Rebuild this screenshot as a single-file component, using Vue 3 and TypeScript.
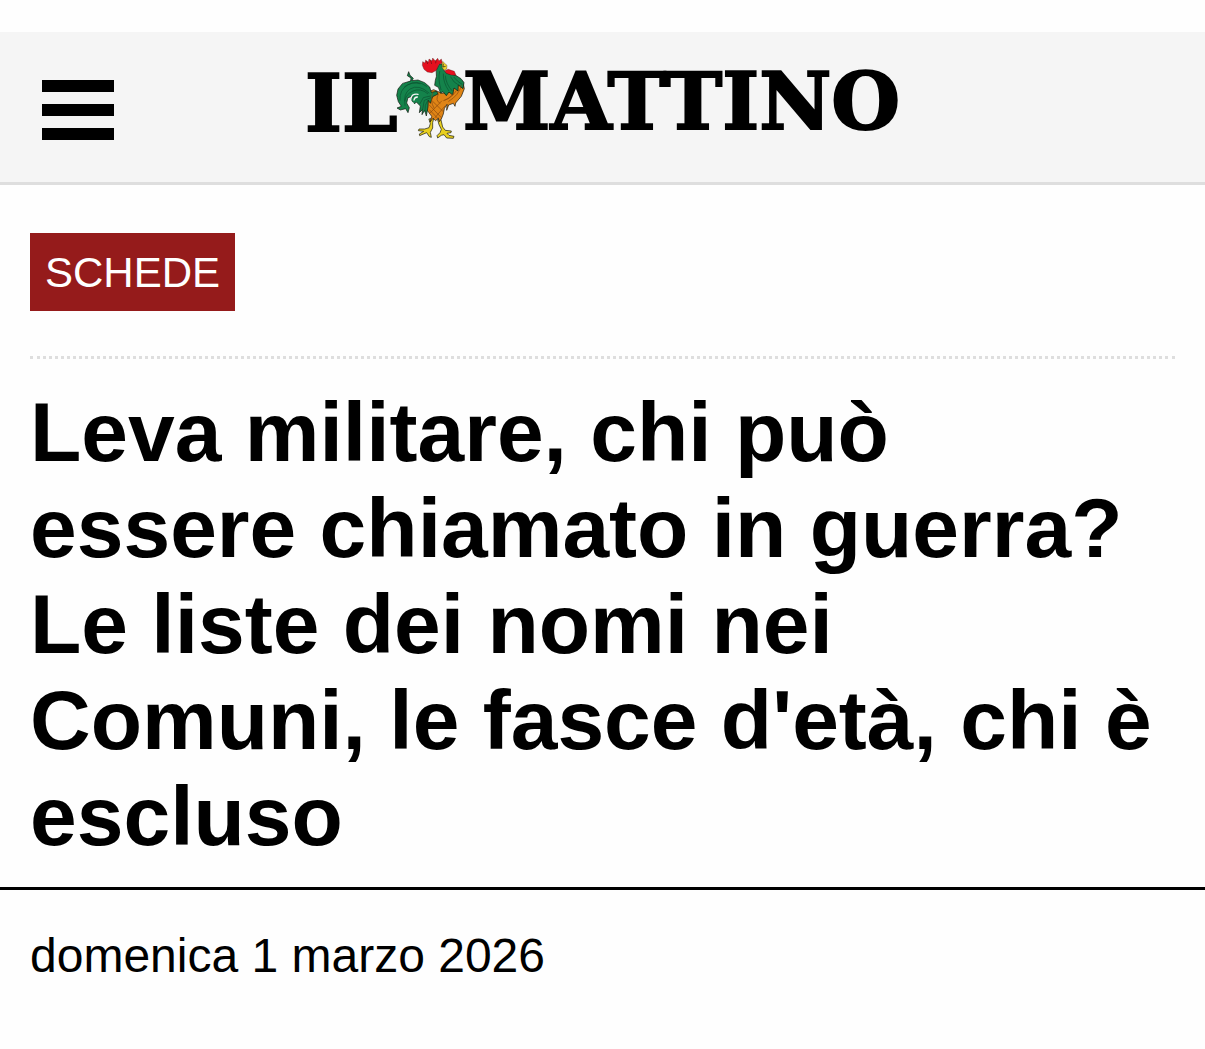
<script setup lang="ts">
const category: string = 'SCHEDE'
const title: string =
  "Leva militare, chi può essere chiamato in guerra? Le liste dei nomi nei Comuni, le fasce d'età, chi è escluso"
const published: string = 'domenica 1 marzo 2026'
</script>

<template>
  <div class="page">
    <header class="topbar">
      <button class="menu" type="button" aria-label="Menu">
        <span class="bar"></span>
        <span class="bar"></span>
        <span class="bar"></span>
      </button>
      <a class="brand" href="#" aria-label="Il Mattino">
        <svg class="logo" viewBox="0 0 600 110" width="600" height="110">
          <text class="word" x="2" y="81">IL</text>
          <text class="word" x="160" y="79">MATTINO</text>
          <svg x="87" y="0" width="80" height="96" viewBox="0 0 240 288">
            <g stroke="#10140c" stroke-width="2" stroke-linejoin="round" stroke-linecap="round">
              <!-- legs -->
              <path fill="#e8cf20" d="M117 208L121 221L117 233L104 237L87 237L85 242L101 244L88 252L89 257L110 248L118 260L124 262L121 247L128 234L128 218L131 206Z" />
              <path fill="#e8cf20" d="M143 209L147 224L154 238L150 248L141 257L143 264L154 256L162 254L170 264L190 265L192 259L177 256L171 250L183 248L184 243L166 241L158 231L153 210Z" />
              <!-- body -->
              <path fill="#df8416" d="M110 128L131 119L156 130L182 124L199 101L218 93L223 116L214 139L197 159L195 169L190 160L176 165L170 181L171 163L163 176L160 192L154 207L148 215L145 204L137 212L129 205L120 216L125 199L116 187L106 174Z" />
              <!-- tail -->
              <path fill="#14834b" d="M62 92L63 84L52 77L56 65L60 76L70 85L66 92L84 90L104 98L119 111L124 127L140 124L144 132L128 140L121 160L115 151L114 171L109 198L104 181L96 194L97 179L88 188L91 168L79 156L73 162L61 148L69 139L54 143L50 159L58 173L54 188L47 176L31 180L21 174L34 169L25 155L20 136L24 117L37 101Z" />
              <!-- neck and head -->
              <path fill="#14834b" d="M139 60L148 43L157 42L161 51L162 62L171 70L197 76L213 86L222 98L219 116L205 105L204 123L192 114L188 135L177 126L169 137L159 125L152 130L145 112L134 106L136 91L139 80Z" />
            </g>
            <g stroke="#3a1210" stroke-width="1" stroke-linejoin="round">
              <!-- comb, beak and wattle -->
              <path fill="#e5101f" d="M139 61L126 68L112 66L102 58L97 46L98 35L105 39L107 30L115 37L117 27L126 33L128 24L136 33L143 25L147 33L154 27L157 40L147 43Z" />
              <path fill="#f1d52c" d="M156 44L158 34L165 41L171 46L170 57L162 61L157 53Z" />
              <path fill="#e5101f" d="M164 62L175 58L193 64L198 76L183 75L169 70Z" />
            </g>
            <g fill="none" stroke="#0a5230" stroke-width="2" stroke-linecap="round">
              <path d="M110 109Q80 87 53 105Q28 119 30 151M117 129Q86 101 60 117Q39 130 45 166M113 131Q91 112 67 124Q47 133 45 152M90 101Q65 94 44 110" />
              <path d="M121 138L100 143L90 161M123 143L103 151L98 177M113 152L106 166L105 185" />
              <path d="M149 64Q143 87 153 119M160 72Q159 97 176 122M166 78Q168 103 186 122M182 81Q188 97 211 109M192 82Q202 95 216 103" />
            </g>
            <g fill="none" stroke="#f5f5f5" stroke-width="4" stroke-linecap="round">
              <path d="M84 133Q67 130 63 144Q59 155 70 160M82 141Q73 142 72 150" />
            </g>
            <g fill="none" stroke="#8a480e" stroke-width="2" stroke-linecap="round">
              <path d="M214 106Q207 136 176 154M199 122Q186 143 164 151M191 130Q178 147 161 152M128 128Q119 153 132 174M145 133Q134 151 150 160" />
              <path d="M117 164L153 202M128 154L160 185M119 180L143 205M155 153L120 189M165 168L135 203" />
            </g>
            <path d="M160 41L159 51L167 49" fill="none" stroke="#161710" stroke-width="2" />
            <path d="M110 33L113 42M122 31L125 42M138 31L137 40" fill="none" stroke="#650d13" stroke-width="2" />
          </svg>
        </svg>
      </a>
    </header>

    <main>
      <article>
        <div class="intro">
          <div class="section">
            <a class="tag" href="#">{{ category }}</a>
          </div>
          <h1>{{ title }}</h1>
        </div>
        <p class="date"><time datetime="2026-03-01">{{ published }}</time></p>
      </article>
    </main>
  </div>
</template>

<style>
body {
  margin: 0;
  background: #fefefe;
}
</style>

<style scoped>
.page {
  padding-top: 32px;
  font-family: "Liberation Sans", Arial, sans-serif;
  color: #000;
}

.topbar {
  display: grid;
  grid-template-columns: 1fr auto 1fr;
  align-items: start;
  height: 150px;
  background: #f5f5f5;
  border-bottom: 3px solid #dedede;
}

.menu {
  display: flex;
  flex-direction: column;
  gap: 12px;
  width: 72px;
  margin: 48px 0 0 42px;
  padding: 0;
  border: 0;
  background: none;
  cursor: pointer;
}

.bar {
  width: 100%;
  height: 12px;
  background: #000;
}

.brand {
  margin-top: 18px;
  color: #000;
  text-decoration: none;
}

.logo {
  display: block;
}

.word {
  font-family: "DejaVu Serif", serif;
  font-size: 79px;
  font-weight: 700;
  fill: #000;
  stroke: #000;
  stroke-width: 2px;
}

.intro {
  padding: 48px 30px 23px;
  border-bottom: 3px solid #000;
}

.section {
  display: flex;
  padding-bottom: 45px;
  border-bottom: 3px dotted #dedede;
}

.tag {
  padding: 2px 15px 0;
  background: #951b1b;
  color: #fff;
  font-size: 42px;
  line-height: 76px;
  text-decoration: none;
}

h1 {
  margin: 25px 0 0;
  font-size: 84px;
  font-weight: 700;
  line-height: 96px;
}

.date {
  margin: 0;
  padding: 36px 30px;
  font-size: 48px;
  line-height: 60px;
}
</style>
